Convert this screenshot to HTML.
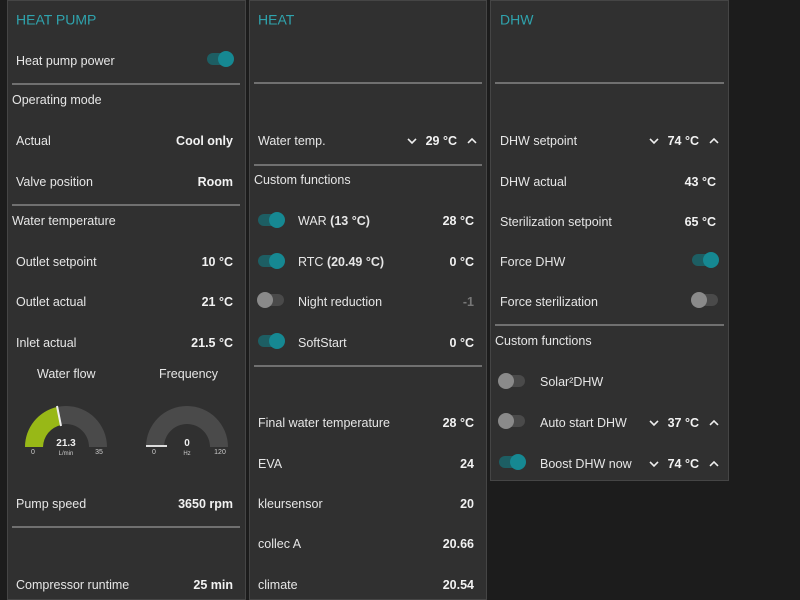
<!DOCTYPE html>
<html><head><meta charset="utf-8"><style>
body{margin:0;width:800px;height:600px;background:#1c1c1c;overflow:hidden;font-family:"Liberation Sans",sans-serif;font-size:12.5px;color:#e6e6e6;position:relative}
.p{position:absolute;background:#303030;border:1px solid #454545;box-sizing:border-box}
.t{position:absolute;white-space:nowrap;transform:translateY(-42%)}
.r{text-align:right}
.b{font-weight:bold;color:#f2f2f2}
.h{color:#2fa3ad;font-size:14px}
.d{position:absolute;height:2px;background:#707070}
.tg{position:absolute;width:26px;height:12px;border-radius:6px;transform:translateY(-50%)}
.tg i{position:absolute;top:-2px;width:16px;height:16px;border-radius:50%}
.on{background:#1d5e63}.on i{right:-1px;background:#168892}
.off{background:#4a4a4a}.off i{left:-1px;background:#8a8a8a}
.ch{position:absolute;transform:translateY(-42%);width:12px;height:12px}
</style></head><body>
<div class="p" style="left:7px;top:0;width:239px;height:600px"></div>
<div class="p" style="left:249px;top:0;width:238px;height:600px"></div>
<div class="p" style="left:490px;top:0;width:239px;height:481px"></div>

<!-- panel 1 -->
<div class="t h" style="left:16px;top:18px">HEAT PUMP</div>
<div class="t" style="left:16px;top:60px">Heat pump power</div>
<div class="tg on" style="left:207px;top:59px"><i></i></div>
<div class="d" style="left:12px;top:83px;width:228px"></div>
<div class="t" style="left:12px;top:99px">Operating mode</div>
<div class="t" style="left:16px;top:140px">Actual</div>
<div class="t b" style="right:567px;top:140px">Cool only</div>
<div class="t" style="left:16px;top:181px">Valve position</div>
<div class="t b" style="right:567px;top:181px">Room</div>
<div class="d" style="left:12px;top:204px;width:228px"></div>
<div class="t" style="left:12px;top:220px">Water temperature</div>
<div class="t" style="left:16px;top:261px">Outlet setpoint</div>
<div class="t b" style="right:567px;top:261px">10 °C</div>
<div class="t" style="left:16px;top:301px">Outlet actual</div>
<div class="t b" style="right:567px;top:301px">21 °C</div>
<div class="t" style="left:16px;top:342px">Inlet actual</div>
<div class="t b" style="right:567px;top:342px">21.5 °C</div>
<div class="t" style="left:37px;top:373px">Water flow</div>
<div class="t" style="left:159px;top:373px">Frequency</div>
<svg style="position:absolute;left:0;top:390px" width="250" height="70">
<path d="M25 57 A41 41 0 0 1 107 57 L89 57 A23 23 0 0 0 43 57 Z" fill="#4a4a4a"/>
<path d="M25 57 A41 41 0 0 1 57 17 L61 35 A23 23 0 0 0 43 57 Z" fill="#98b817"/>
<line x1="57" y1="16" x2="61" y2="36" stroke="#eee" stroke-width="2"/>
<path d="M146 57 A41 41 0 0 1 228 57 L210 57 A23 23 0 0 0 164 57 Z" fill="#4a4a4a"/>
<line x1="146" y1="56" x2="167" y2="56" stroke="#ddd" stroke-width="2"/>
<text x="66" y="56" fill="#eee" font-size="10" font-weight="bold" text-anchor="middle" font-family="Liberation Sans">21.3</text>
<text x="66" y="65" fill="#ccc" font-size="6" text-anchor="middle" font-family="Liberation Sans">L/min</text>
<text x="33" y="64" fill="#ccc" font-size="7" text-anchor="middle" font-family="Liberation Sans">0</text>
<text x="99" y="64" fill="#ccc" font-size="7" text-anchor="middle" font-family="Liberation Sans">35</text>
<text x="187" y="56" fill="#eee" font-size="10" font-weight="bold" text-anchor="middle" font-family="Liberation Sans">0</text>
<text x="187" y="65" fill="#ccc" font-size="6" text-anchor="middle" font-family="Liberation Sans">Hz</text>
<text x="154" y="64" fill="#ccc" font-size="7" text-anchor="middle" font-family="Liberation Sans">0</text>
<text x="220" y="64" fill="#ccc" font-size="7" text-anchor="middle" font-family="Liberation Sans">120</text>
</svg>
<div class="t" style="left:16px;top:503px">Pump speed</div>
<div class="t b" style="right:567px;top:503px">3650 rpm</div>
<div class="d" style="left:12px;top:526px;width:228px"></div>
<div class="t" style="left:16px;top:584px">Compressor runtime</div>
<div class="t b" style="right:567px;top:584px">25 min</div>

<!-- panel 2 -->
<div class="t h" style="left:258px;top:18px">HEAT</div>
<div class="d" style="left:254px;top:82px;width:228px"></div>
<div class="t" style="left:258px;top:140px">Water temp.</div>
<svg class="ch" style="left:406px;top:140px"><path d="M2 4l4 4 4-4" stroke="#eee" stroke-width="1.6" fill="none"/></svg>
<div class="t b" style="right:343px;top:140px">29 °C</div>
<svg class="ch" style="left:466px;top:140px"><path d="M2 8l4-4 4 4" stroke="#eee" stroke-width="1.6" fill="none"/></svg>
<div class="d" style="left:254px;top:164px;width:228px"></div>
<div class="t" style="left:254px;top:179px">Custom functions</div>
<div class="tg on" style="left:258px;top:220px"><i></i></div>
<div class="t" style="left:298px;top:220px">WAR <b>(13 °C)</b></div>
<div class="t b" style="right:326px;top:220px">28 °C</div>
<div class="tg on" style="left:258px;top:261px"><i></i></div>
<div class="t" style="left:298px;top:261px">RTC <b>(20.49 °C)</b></div>
<div class="t b" style="right:326px;top:261px">0 °C</div>
<div class="tg off" style="left:258px;top:300px"><i></i></div>
<div class="t" style="left:298px;top:301px">Night reduction</div>
<div class="t b" style="right:326px;top:301px;color:#777">-1</div>
<div class="tg on" style="left:258px;top:341px"><i></i></div>
<div class="t" style="left:298px;top:342px">SoftStart</div>
<div class="t b" style="right:326px;top:342px">0 °C</div>
<div class="d" style="left:254px;top:365px;width:228px"></div>
<div class="t" style="left:258px;top:422px">Final water temperature</div>
<div class="t b" style="right:326px;top:422px">28 °C</div>
<div class="t" style="left:258px;top:463px">EVA</div>
<div class="t b" style="right:326px;top:463px">24</div>
<div class="t" style="left:258px;top:503px">kleursensor</div>
<div class="t b" style="right:326px;top:503px">20</div>
<div class="t" style="left:258px;top:543px">collec A</div>
<div class="t b" style="right:326px;top:543px">20.66</div>
<div class="t" style="left:258px;top:584px">climate</div>
<div class="t b" style="right:326px;top:584px">20.54</div>

<!-- panel 3 -->
<div class="t h" style="left:500px;top:18px">DHW</div>
<div class="d" style="left:495px;top:82px;width:229px"></div>
<div class="t" style="left:500px;top:140px">DHW setpoint</div>
<svg class="ch" style="left:648px;top:140px"><path d="M2 4l4 4 4-4" stroke="#eee" stroke-width="1.6" fill="none"/></svg>
<div class="t b" style="right:101px;top:140px">74 °C</div>
<svg class="ch" style="left:708px;top:140px"><path d="M2 8l4-4 4 4" stroke="#eee" stroke-width="1.6" fill="none"/></svg>
<div class="t" style="left:500px;top:181px">DHW actual</div>
<div class="t b" style="right:84px;top:181px">43 °C</div>
<div class="t" style="left:500px;top:221px">Sterilization setpoint</div>
<div class="t b" style="right:84px;top:221px">65 °C</div>
<div class="t" style="left:500px;top:261px">Force DHW</div>
<div class="tg on" style="left:692px;top:260px"><i></i></div>
<div class="t" style="left:500px;top:301px">Force sterilization</div>
<div class="tg off" style="left:692px;top:300px"><i></i></div>
<div class="d" style="left:495px;top:324px;width:229px"></div>
<div class="t" style="left:495px;top:340px">Custom functions</div>
<div class="tg off" style="left:499px;top:381px"><i></i></div>
<div class="t" style="left:540px;top:381px">Solar²DHW</div>
<div class="tg off" style="left:499px;top:421px"><i></i></div>
<div class="t" style="left:540px;top:422px">Auto start DHW</div>
<svg class="ch" style="left:648px;top:422px"><path d="M2 4l4 4 4-4" stroke="#eee" stroke-width="1.6" fill="none"/></svg>
<div class="t b" style="right:101px;top:422px">37 °C</div>
<svg class="ch" style="left:708px;top:422px"><path d="M2 8l4-4 4 4" stroke="#eee" stroke-width="1.6" fill="none"/></svg>
<div class="tg on" style="left:499px;top:462px"><i></i></div>
<div class="t" style="left:540px;top:463px">Boost DHW now</div>
<svg class="ch" style="left:648px;top:463px"><path d="M2 4l4 4 4-4" stroke="#eee" stroke-width="1.6" fill="none"/></svg>
<div class="t b" style="right:101px;top:463px">74 °C</div>
<svg class="ch" style="left:708px;top:463px"><path d="M2 8l4-4 4 4" stroke="#eee" stroke-width="1.6" fill="none"/></svg>
</body></html>
